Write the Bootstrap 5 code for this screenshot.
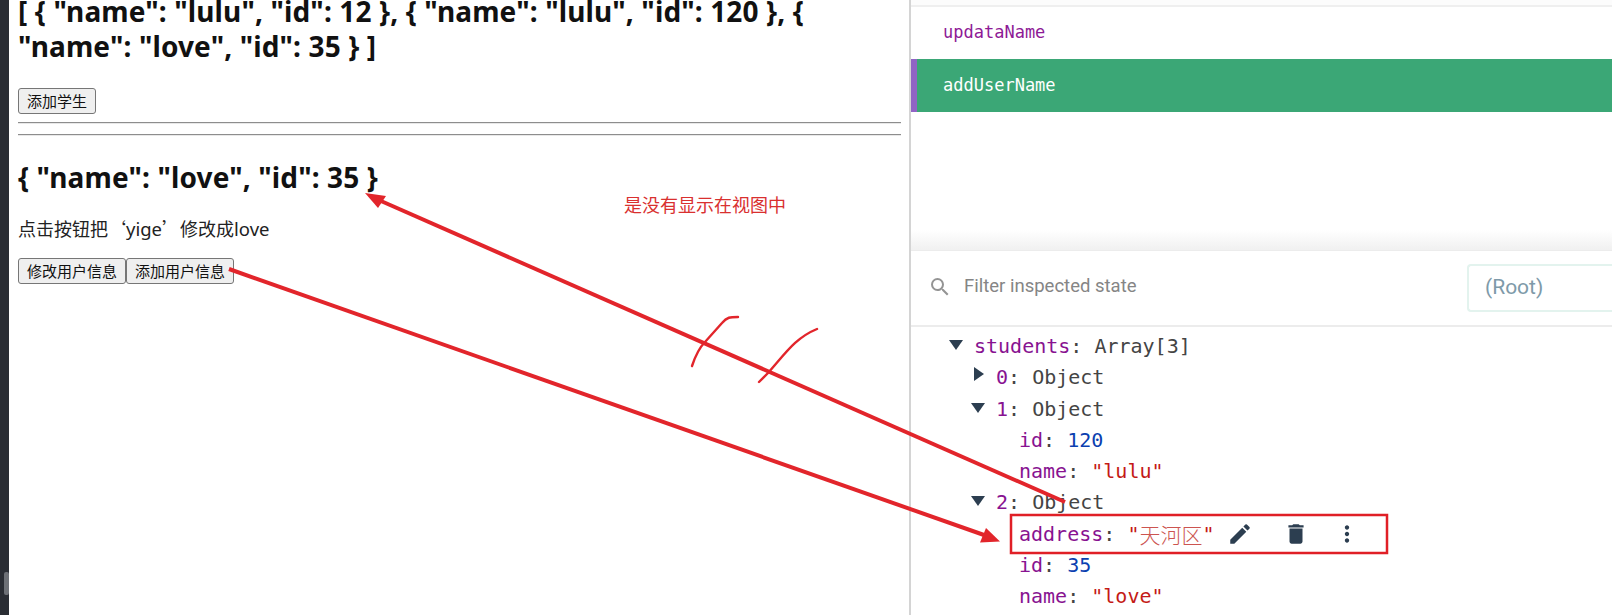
<!DOCTYPE html>
<html lang="zh">
<head>
<meta charset="utf-8">
<title>Vuex state</title>
<link href="https://cdn.jsdelivr.net/npm/bootstrap@5.3.0/dist/css/bootstrap.min.css" rel="stylesheet">
<style>
html,body{height:615px;overflow:hidden;background:#fff}
body{font-family:"Noto Sans","Noto Sans CJK SC",sans-serif;color:#111}
.rail{width:9px;background:#2a2d34;padding-bottom:20px}
.rail-blob{width:5px;height:23px;margin-left:4px;background:#6d7076;border-radius:2px}
.page-pane{width:902px;padding:0 8px 0 9px;border-right:2px solid #d4d4d4}
.json-title{font-family:"Noto Sans","Noto Sans CJK SC",sans-serif;font-weight:700;font-size:28px;line-height:35px;color:#111;letter-spacing:.13px}
.json-list{margin:-6px 0 24px}
.json-one{margin:24px 0 20px}
.plain-btn{background:#efefef;border:1px solid #767676;border-radius:3px;color:#111;font-size:15px;line-height:24px;padding:0 8px;height:26px;font-family:"Noto Sans CJK SC",sans-serif;--bs-btn-hover-bg:#efefef}
.rule{margin:0;border:0;border-top:1px solid #8d8d8d;border-bottom:1px solid #e8e8e8;opacity:1}
.rule-a{margin-top:8px}
.rule-b{margin-top:10px}
.hint{font-size:18px;line-height:27px;margin:0 0 16px;font-family:"Noto Sans CJK SC",sans-serif;color:#222}
.hint-latin{font-family:"Noto Sans",sans-serif;font-size:18.5px}
.tools-pane{min-width:0}
.top-strip{height:7px;border-bottom:2px solid #efefef;background:#fcfcfc}
.mut-row{height:52px;padding-left:32px;font-family:"DejaVu Sans Mono",monospace;font-size:17px;color:#8e1a96;letter-spacing:0}
.mut-active{background:#3ba776;color:#fff;border-left:6px solid #9164c5;padding-left:26px;height:53px}
.mut-blank{height:138px;background:linear-gradient(#fff 118px,#f1f1f1 137px)}
.filter-bar{height:77px;border-top:1px solid #ececec;border-bottom:2px solid #ececec;padding:0 0 2px 17px}
.filter-text{font-family:Roboto,sans-serif;font-size:18.5px;color:#858585;margin-left:12px}
.root-box{margin-left:auto;width:145px;height:48px;border:2px solid #e3f3ee;border-right:0;border-radius:4px 0 0 4px;padding-left:16px;font-family:Roboto,sans-serif;font-size:21px;color:#7e9aa9;margin-top:1px}
.state-tree{padding-top:4px;font-family:"DejaVu Sans Mono",monospace;font-size:20px;line-height:31px;color:#444}
.tree-row{height:31.25px;white-space:pre}
.lv0{padding-left:63px}
.lv1{padding-left:85px}
.lv2{padding-left:108px}
.tw{display:inline-block;width:0;height:0;border-style:solid;vertical-align:3px}
.tw-down{border-width:10px 7px 0 7px;border-color:#2c3e50 transparent transparent;margin-left:-25px;margin-right:11px}
.tw-right{border-width:7px 0 7px 10px;border-color:transparent transparent transparent #2c3e50;margin-left:-22px;margin-right:12px}
.k{color:#881391}
.n{color:#0b3fb0}
.s{color:#c41a16}
.cjk{font-family:"Noto Sans CJK SC",sans-serif;font-weight:300;color:#cc5450;font-size:21px}
.act{width:26px;height:26px;fill:#2c3e50}
.act-a{margin-left:13px}
.act-b{margin-left:30px}
.act-c{margin-left:25px}
.ink-layer{top:0;left:0;pointer-events:none}
.note{position:absolute;left:624px;top:191px;font-family:"Noto Sans CJK SC",sans-serif;font-size:18px;line-height:27px;color:#d9302f;letter-spacing:0}
</style>
</head>
<body class="d-flex m-0 position-relative">
<div class="rail flex-shrink-0 d-flex align-items-end"><div class="rail-blob"></div></div>
<main class="page-pane flex-shrink-0">
  <h2 class="json-title json-list">[ { "name": "lulu", "id": 12 }, { "name": "lulu", "id": 120 }, { "name": "love", "id": 35 } ]</h2>
  <button class="btn plain-btn d-block" type="button">添加学生</button>
  <hr class="rule rule-a">
  <hr class="rule rule-b">
  <h2 class="json-title json-one">{ "name": "love", "id": 35 }</h2>
  <p class="hint">点击按钮把‘<span class="hint-latin">yige</span>’修改成<span class="hint-latin">love</span></p>
  <div class="d-flex">
    <button class="btn plain-btn" type="button">修改用户信息</button>
    <button class="btn plain-btn" type="button">添加用户信息</button>
  </div>
</main>
<aside class="tools-pane flex-grow-1">
  <div class="top-strip"></div>
  <div class="mut-row d-flex align-items-center">updataName</div>
  <div class="mut-row mut-active d-flex align-items-center">addUserName</div>
  <div class="mut-blank"></div>
  <div class="filter-bar d-flex align-items-center">
    <svg width="24" height="24" viewBox="0 0 24 24" fill="#949494"><path d="M15.5 14h-.79l-.28-.27A6.47 6.47 0 0 0 16 9.5 6.5 6.5 0 1 0 9.5 16c1.61 0 3.09-.59 4.23-1.57l.27.28v.79l5 4.99L20.49 19l-4.99-5zm-6 0C7.01 14 5 11.99 5 9.5S7.01 5 9.5 5 14 7.01 14 9.5 11.99 14 9.5 14z"/></svg>
    <span class="filter-text">Filter inspected state</span>
    <div class="root-box d-flex align-items-center">(Root)</div>
  </div>
  <div class="state-tree">
    <div class="tree-row lv0"><i class="tw tw-down"></i><span class="k">students</span>: Array[3]</div>
    <div class="tree-row lv1"><i class="tw tw-right"></i><span class="k">0</span>: Object</div>
    <div class="tree-row lv1"><i class="tw tw-down"></i><span class="k">1</span>: Object</div>
    <div class="tree-row lv2"><span class="k">id</span>: <span class="n">120</span></div>
    <div class="tree-row lv2"><span class="k">name</span>: <span class="s">"lulu"</span></div>
    <div class="tree-row lv1"><i class="tw tw-down"></i><span class="k">2</span>: Object</div>
    <div class="tree-row lv2 d-flex align-items-center"><span class="k">address</span>: <span class="s">"</span><span class="cjk">天河区</span><span class="s">"</span><svg class="act act-a" viewBox="0 0 24 24"><path d="M3 17.25V21h3.75L17.81 9.94l-3.75-3.75L3 17.25zM20.71 7.04a1 1 0 0 0 0-1.41l-2.34-2.34a1 1 0 0 0-1.41 0l-1.83 1.83 3.75 3.75 1.83-1.83z"/></svg><svg class="act act-b" viewBox="0 0 24 24"><path d="M6 19c0 1.1.9 2 2 2h8c1.1 0 2-.9 2-2V7H6v12zM19 4h-3.5l-1-1h-5l-1 1H5v2h14V4z"/></svg><svg class="act act-c" viewBox="0 0 24 24"><path d="M12 8c1.1 0 2-.9 2-2s-.9-2-2-2-2 .9-2 2 .9 2 2 2zm0 2c-1.1 0-2 .9-2 2s.9 2 2 2 2-.9 2-2-.9-2-2-2zm0 6c-1.1 0-2 .9-2 2s.9 2 2 2 2-.9 2-2-.9-2-2-2z"/></svg></div>
    <div class="tree-row lv2"><span class="k">id</span>: <span class="n">35</span></div>
    <div class="tree-row lv2"><span class="k">name</span>: <span class="s">"love"</span></div>
  </div>
</aside>
<div class="note">是没有显示在视图中</div>
<svg class="position-absolute ink-layer" width="1612" height="615" viewBox="0 0 1612 615" fill="none">
  <rect x="1011" y="515" width="376" height="38" stroke="#e01f26" stroke-width="2.5"/>
  <path d="M1065 502 381 201" stroke="#e2252b" stroke-width="4"/>
  <polygon points="365,193 386,196 378,208" fill="#e2252b"/>
  <path d="M229 269 984 535" stroke="#e2252b" stroke-width="4"/>
  <polygon points="1000,541.5 986,528 980,542.5" fill="#e2252b"/>
  <path d="M692 366C696 354 699 348 705 342L722 323C727 317 730 317 738 317" stroke="#e2252b" stroke-width="2.4" stroke-linecap="round"/>
  <path d="M759 382 768 373C785 354 795 338 817 329" stroke="#e2252b" stroke-width="2.4" stroke-linecap="round"/>
</svg>
<script src="https://cdn.jsdelivr.net/npm/bootstrap@5.3.0/dist/js/bootstrap.bundle.min.js"></script>
</body>
</html>
